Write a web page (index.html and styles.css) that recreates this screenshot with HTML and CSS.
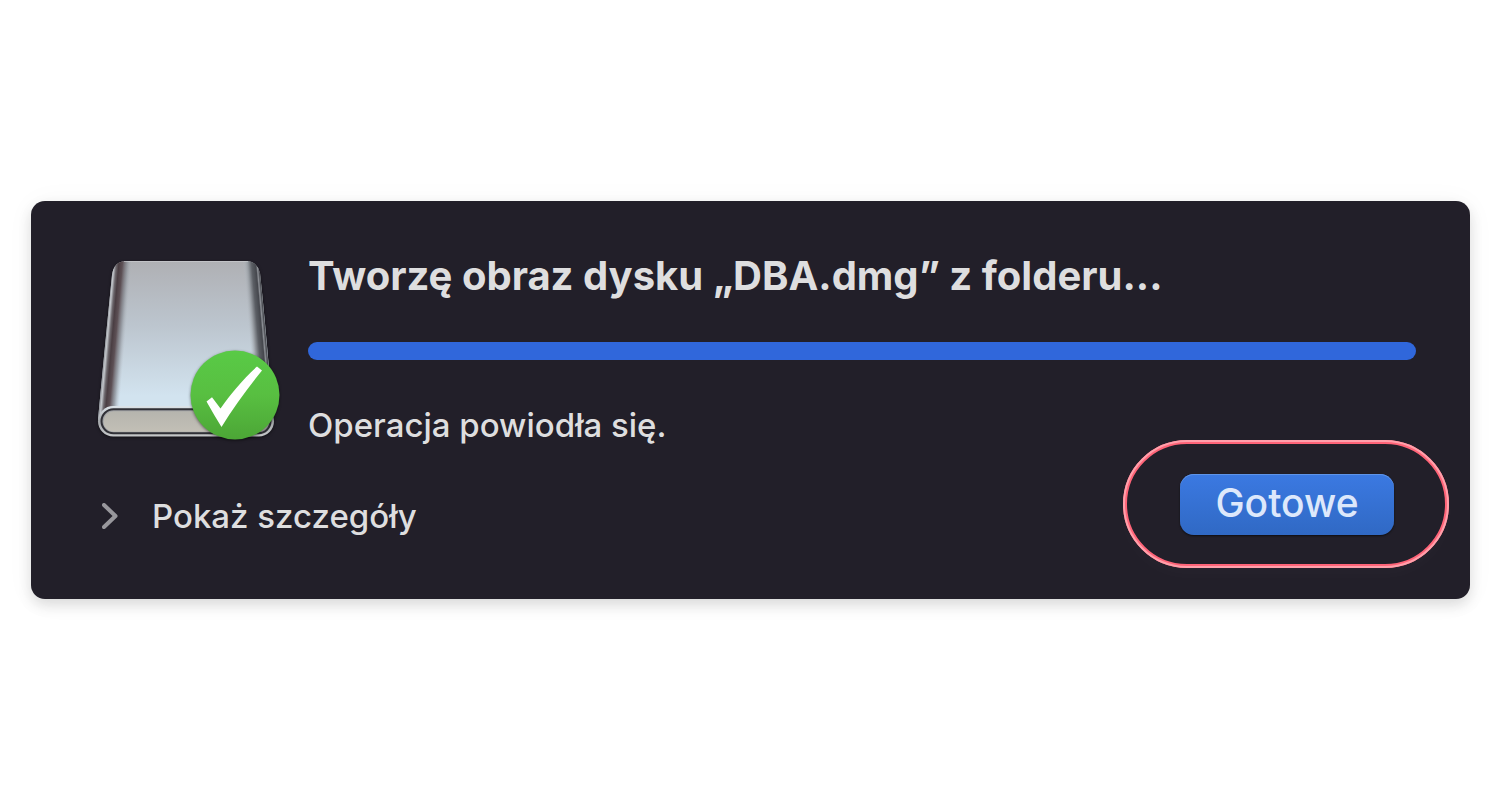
FILE: index.html
```html
<!DOCTYPE html>
<html lang="pl">
<head>
  <meta charset="UTF-8">
  <meta name="viewport" content="width=device-width, initial-scale=1">
  <title>DBA.dmg</title>
  <link rel="stylesheet" href="styles.css">
</head>
<body>

  <main class="dialog">
    <div class="dialog-body">
      <svg class="disk" viewBox="94 256 188 188" aria-hidden="true">
        <defs>
          <linearGradient id="face" x1="0" y1="0" x2="0" y2="1">
            <stop offset="0" stop-color="#afb0b4"/>
            <stop offset=".4" stop-color="#bcc5ce"/>
            <stop offset=".85" stop-color="#d2e3ef"/>
          </linearGradient>
          <linearGradient id="sideLeft" gradientUnits="userSpaceOnUse" x1="106" y1="330" x2="126" y2="331.800">
            <stop offset="0" stop-color="#8a8b90"/>
            <stop offset=".1" stop-color="#c3c7cc"/>
            <stop offset=".22" stop-color="#6c676c"/>
            <stop offset=".34" stop-color="#4a3e43"/>
            <stop offset=".52" stop-color="#5d5055"/>
            <stop offset=".75" stop-color="#85888f" stop-opacity=".7"/>
            <stop offset="1" stop-color="#b5bcc3" stop-opacity="0"/>
          </linearGradient>
          <linearGradient id="sideRight" gradientUnits="userSpaceOnUse" x1="249" y1="331.500" x2="266" y2="330">
            <stop offset="0" stop-color="#b5bcc3" stop-opacity="0"/>
            <stop offset=".28" stop-color="#969ba1"/>
            <stop offset=".5" stop-color="#5b5e64"/>
            <stop offset=".74" stop-color="#45474d"/>
            <stop offset=".82" stop-color="#8d9096"/>
            <stop offset=".92" stop-color="#4a4c52"/>
            <stop offset="1" stop-color="#85888d"/>
          </linearGradient>
          <linearGradient id="rim" x1="0" y1="0" x2="0" y2="1">
            <stop offset="0" stop-color="#dde4e9"/>
            <stop offset=".5" stop-color="#a3a6aa"/>
            <stop offset="1" stop-color="#c6c8ca"/>
          </linearGradient>
          <linearGradient id="front" x1="0" y1="0" x2="0" y2="1">
            <stop offset="0" stop-color="#b6b5ae"/>
            <stop offset="1" stop-color="#c2bfb6"/>
          </linearGradient>
          <linearGradient id="badge" x1="0" y1="0" x2="0" y2="1">
            <stop offset="0" stop-color="#59ca46"/>
            <stop offset=".5" stop-color="#58bf41"/>
            <stop offset="1" stop-color="#4ca636"/>
          </linearGradient>
          <filter id="soft" x="-10%" y="-10%" width="120%" height="120%" color-interpolation-filters="sRGB">
            <feDropShadow dx="0" dy="1" stdDeviation="1.500" flood-color="#000" flood-opacity=".5"/>
          </filter>
        </defs>
        <g filter="url(#soft)">
          <path d="M126 261H246Q257 261 260 273C264 310 269 365 273 420H98C103 366 108 315 112 275Q114 261 126 261Z" fill="url(#face)"/>
          <path d="M134 261H126Q114 261 112 275C108 315 103 366 98 420H121C125 361 129 305 134 261Z" fill="url(#sideLeft)"/>
          <path d="M238 261H246Q257 261 260 273C264 310 269 365 273 420H252C249 350 245 300 238 261Z" fill="url(#sideRight)"/>
          <path d="M124 261.500H248" stroke="#cfd1d4" stroke-width="1" opacity=".6"/>
          <rect x="98" y="406" width="176" height="30.500" rx="15.200" fill="url(#rim)"/>
        </g>
        <rect x="101.500" y="409.300" width="169" height="24" rx="12" fill="#9fa1a4" stroke="#303036" stroke-width="2"/>
        <rect x="103.500" y="411.300" width="165" height="20.500" rx="10" fill="url(#front)"/>
        <circle cx="235" cy="395" r="44.500" fill="url(#badge)" filter="url(#soft)"/>
        <path d="M206.500 401.500L212 397.300L220.500 408.500C230 395 243 379 257 366.500L262 370.500C247 389 233 408 221.500 427Q214 415 206.500 401.500Z" fill="#fff"/>
      </svg>

      <div class="info">
        <h1 id="title">Tworzę obraz dysku „DBA.dmg” z folderu...</h1>
        <progress class="bar" value="100" max="100" aria-labelledby="title"></progress>
        <p class="status">Operacja powiodła się.</p>
      </div>
    </div>

    <div class="dialog-footer">
      <button type="button" class="details" aria-expanded="false">
        <svg class="chevron" viewBox="0 0 16 26" aria-hidden="true">
          <path d="M2 2L13.500 13L2 24"/>
        </svg>
        Pokaż szczegóły
      </button>
      <div class="highlight">
        <button type="button" class="done">Gotowe</button>
      </div>
    </div>
  </main>

</body>
</html>
```
FILE: styles.css
```css
:root {
  --bg: #ffffff;
  --panel: #221f29;
  --text: #dededf;
  --accent: #3067db;
  --ring: #ff6478;
  --ring-light: #ffa0ab;
}
*, *::before, *::after { box-sizing: border-box; margin: 0; padding: 0; }
body {
  min-height: 100vh;
  display: grid;
  align-items: center;
  padding: 0 30px 0 31px;
  background: var(--bg);
  color: var(--text);
  font-family: Inter, 'Liberation Sans', sans-serif;
}
button {
  border: none;
  font-family: inherit;
  cursor: pointer;
}

/* dialog */
.dialog {
  padding: 50px 54px 64px 63px;
  border-radius: 14px;
  background: var(--panel);
  box-shadow: 0 6px 14px rgba(0,10,5,0.13), 0 2px 30px rgba(0,0,0,0.04);
}
.dialog-body {
  display: flex;
  align-items: center;
  gap: 26px;
}
.disk {
  width: 188px;
  height: 188px;
  flex: none;
}
.info {
  flex: 1;
  display: flex;
  flex-direction: column;
  gap: 41px;
}
.info h1 {
  font-size: 40px;
  line-height: 50px;
  font-weight: 700;
}
.bar {
  appearance: none;
  display: block;
  width: 100%;
  height: 18px;
  border: none;
  border-radius: 9px;
  overflow: hidden;
}
.bar::-webkit-progress-bar { background: #37343e; }
.bar::-webkit-progress-value { background: var(--accent); }
.bar::-moz-progress-bar { background: var(--accent); }
.status {
  font-size: 33px;
  line-height: 48px;
  font-weight: 500;
}

/* footer */
.dialog-footer {
  margin-top: 25px;
  display: flex;
  justify-content: space-between;
  align-items: flex-end;
}
.details {
  display: flex;
  align-items: center;
  gap: 34px;
  padding-left: 8px;
  background: none;
  color: var(--text);
  font-size: 33px;
  line-height: 38px;
  font-weight: 500;
}
.chevron {
  width: 16px;
  height: 26px;
  fill: none;
  stroke: #98979c;
  stroke-width: 4;
  stroke-linecap: round;
  stroke-linejoin: round;
}
.highlight {
  position: relative;
  margin-right: 22px;
}
.highlight::before,
.highlight::after {
  content: '';
  position: absolute;
  inset: -34px -55px -33px -57px;
  border-radius: 64px;
  pointer-events: none;
}
.highlight::before {
  border: 4px solid var(--ring);
  box-shadow: 0 8px 16px rgba(255,255,255,0.02);
}
.highlight::after { border: 2px solid var(--ring-light); }
.done {
  display: block;
  min-width: 214px;
  height: 61px;
  padding: 0 32px 4px;
  border-radius: 14px;
  background: linear-gradient(#3b79e2, #3069c4);
  box-shadow: inset 0 1px 0 #5f94e8, 0 1px 2px rgba(0,0,0,0.6);
  color: #dde8fb;
  font-size: 39px;
  line-height: 48px;
  font-weight: 500;
}
```
